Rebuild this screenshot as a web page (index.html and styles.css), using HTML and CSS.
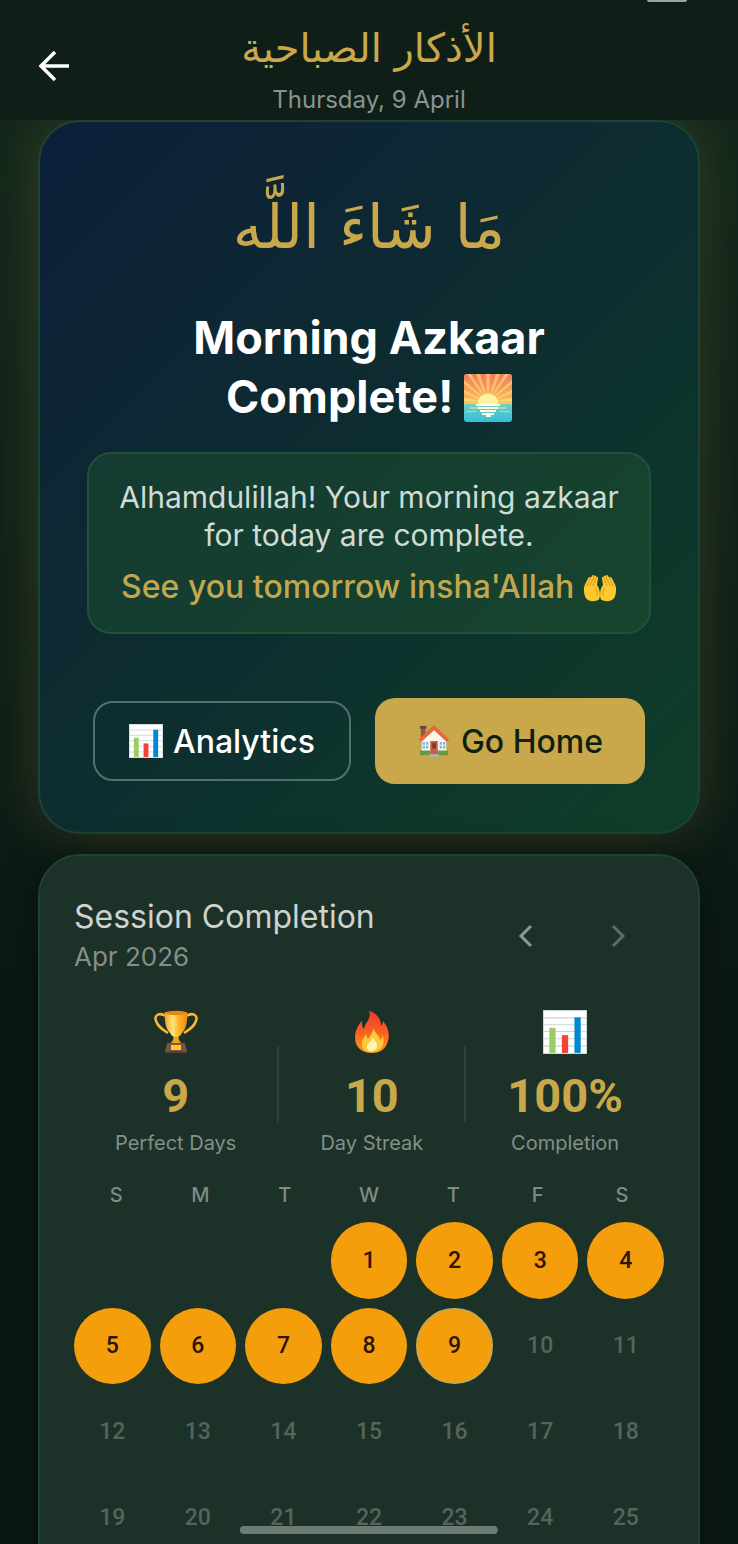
FILE: index.html
```html
<!DOCTYPE html>
<html lang="en">
<head>
    <meta charset="UTF-8">
    <meta name="viewport" content="width=device-width, initial-scale=1.0">
    <title>Morning Azkaar</title>
    <link rel="stylesheet" href="styles.css">
</head>
<body>
    <!-- Emoji artwork -->
    <svg class="sprite" aria-hidden="true">
        <defs>
            <linearGradient id="sky" x1="0" y1="0" x2="0" y2="1">
                <stop offset="0" stop-color="#f2795f"/>
                <stop offset="1" stop-color="#fcc75c"/>
            </linearGradient>
            <linearGradient id="sea" x1="0" y1="0" x2="0" y2="1">
                <stop offset="0.5" stop-color="#8fd3b5"/>
                <stop offset="1" stop-color="#2fc0dc"/>
            </linearGradient>
            <linearGradient id="cup" x1="0" y1="0" x2="1" y2="0">
                <stop offset="0" stop-color="#f79a1c"/>
                <stop offset="0.35" stop-color="#ffe680"/>
                <stop offset="0.6" stop-color="#fdb827"/>
                <stop offset="1" stop-color="#f18a12"/>
            </linearGradient>
            <linearGradient id="fire" x1="0" y1="0" x2="0" y2="1">
                <stop offset="0" stop-color="#f0382c"/>
                <stop offset="0.6" stop-color="#fb6a1c"/>
                <stop offset="1" stop-color="#ff9a1f"/>
            </linearGradient>
        </defs>
        <symbol id="sunrise" viewBox="0 0 48 48">
            <rect width="48" height="48" rx="3" fill="url(#sea)"/>
            <path d="M3 0h42a3 3 0 0 1 3 3v27H0V3a3 3 0 0 1 3-3z" fill="url(#sky)"/>
            <path d="M24 28 22 0h4zM24 28 12 0h4zM24 28 32 0h4zM24 28 3 0h4zM24 28 41 0h4zM24 28 0 6v4zM24 28 48 6v4zM24 28 0 16v3zM24 28 48 16v3zM24 28 0 24v3zM24 28 48 24v3z" fill="#ffe27a" opacity=".6"/>
            <path d="M13.500 30a10.500 10.500 0 1 1 21 0z" fill="#fff3a0"/>
            <path d="M6 33h36v2H6zM2 37h10v1H2zM36 37h10v1H36z" fill="#a8dcc0"/>
            <path d="M12 30h24v2H12zM14 33h20v2H14zM16 36h16v2H16zM18 39h12v2H18zM22 41h5v2h-5z" fill="#fffbe0"/>
        </symbol>
        <symbol id="chart" viewBox="0 0 42 42">
            <rect width="42" height="42" fill="#fff"/>
            <path d="M0 7.500h42M0 14h42M0 20.500h42M0 27.500h42M0 34.500h42" stroke="#ced3d6" stroke-width="1"/>
            <path d="M6 17h6v24H6z" fill="#9ccc65"/>
            <path d="M18 24h6v17h-6z" fill="#f44336"/>
            <path d="M30 7h6v34h-6z" fill="#0288d1"/>
            <rect x=".5" y=".5" width="41" height="41" fill="none" stroke="#cfd8dc"/>
        </symbol>
        <symbol id="hands" viewBox="0 0 34 28">
            <g id="palm">
                <path d="M16 25.500C12 28 5 28 2.500 23.500 1 20 .2 15 1.500 11.500L5 4.500c1-2 2.500-1.700 2.300-.2L9 1.800c1.400-1.500 2.600-.8 2.200.7 1.300-1.500 2.600-.8 2.300.7 1.200-.6 1.900.2 1.500 1.500L14 11c1.500 2 2.300 4 2.700 6.500.4 3 .4 6-.7 8z" fill="#fdc92e"/>
                <path d="M4 12l3.300-7.500M7 11.500l4-9M10 11.500l3.500-8M12.500 14c1.500 2 1.700 4 1.500 7" fill="none" stroke="#d9921a" stroke-width="1" stroke-linecap="round"/>
            </g>
            <use href="#palm" transform="matrix(-1 0 0 1 34 0)"/>
        </symbol>
        <symbol id="house" viewBox="0 0 34 36">
            <path d="M3 4h5v12H3z" fill="#8d5a43"/>
            <path d="M2 2h7v3H2z" fill="#6d4534"/>
            <path d="M4 17 17 5l13 12v14H4z" fill="#faf6ea"/>
            <path d="M17 1 1 16l2.500 3L17 6.500 30.500 19l2.500-3z" fill="#e8673c"/>
            <path d="M2 28h11v5H2zM21 28h11v5H21z" fill="#679a3c"/>
            <path d="M13 18h8v14h-8z" fill="#cf5a45"/>
            <path d="M15 20h4v6h-4z" fill="#8e342c"/>
            <path d="M5 19h6v7H5zM23 19h6v7h-6z" fill="#7db9dc"/>
            <path d="M8 19v7M5 22.500h6M26 19v7M23 22.500h6" stroke="#fff" stroke-width="1"/>
            <path d="M12 32h10v3H12z" fill="#a9b2b6"/>
        </symbol>
        <symbol id="trophy" viewBox="0 0 44 44">
            <path d="M12 6C5 2 0 5 2 11c2 6 7 9 12 12M32 6c7-4 12-1 10 5-2 6-7 9-12 12" fill="none" stroke="#fbb829" stroke-width="2.500"/>
            <path d="M20 24h4l1 6 3 4H16l3-4z" fill="#f3a21b"/>
            <path d="M11 2h22c1 9-1 17-5 21-2 3-3 4-6 4s-4-1-6-4c-4-4-6-12-5-21z" fill="url(#cup)"/>
            <ellipse cx="22" cy="3" rx="11" ry="2.200" fill="#e88a10"/>
            <path d="M13 33h18l2 9.500H11z" fill="#795548"/>
            <path d="M17 35h10v5H17z" fill="#ffca28"/>
            <path d="M11 41h22v2H11z" fill="#5d4037"/>
        </symbol>
        <symbol id="flame" viewBox="0 0 36 44">
            <path d="M15 1c8 2 12 8 12 15 1-1 2-3 2-5 5 6 7 13 5 20-2 8-8 12-16 12C8 43 1 37 1 28 1 21 4 15 8 11c0 4 0 6 2 8C11 12 18 9 15 1z" fill="url(#fire)"/>
            <path d="M19 16c0 6 7 9 7 14 2-1 3-4 2-6 3 6 3 16-9 18-9 1-12-5-11-10 1-4 3-5 4-8 1 3 1 4 2 5 3-4 6-7 5-13z" fill="#ffc93c"/>
            <path d="M19 27c1 4 5 6 4 10-1 5-10 6-10 0 0-4 5-5 6-10z" fill="#fff3b0"/>
        </symbol>
    </svg>

    <header class="top-bar">
        <span class="status-pill"></span>
        <button type="button" class="icon-button back" aria-label="Back">
            <svg viewBox="0 0 32 32"><path d="M31 16H3M17 2 3 16l14 14" fill="none" stroke="#fff" stroke-width="3.500"/></svg>
        </button>
        <div class="heading">
            <h1 lang="ar" dir="rtl">الأذكار الصباحية</h1>
            <p>Thursday, 9 April</p>
        </div>
    </header>

    <main>
        <section class="card complete-card">
            <p class="praise" lang="ar" dir="rtl">مَا شَاءَ اللَّه</p>
            <h2>Morning Azkaar<br>Complete! <svg class="emoji"><use href="#sunrise"/></svg></h2>
            <div class="message">
                <p>Alhamdulillah! Your morning azkaar<br>for today are complete.</p>
                <p class="see-you">See you tomorrow insha'Allah <svg class="emoji"><use href="#hands"/></svg></p>
            </div>
            <div class="actions">
                <button type="button" class="btn btn-outline"><svg class="emoji"><use href="#chart"/></svg> Analytics</button>
                <button type="button" class="btn btn-gold"><svg class="emoji"><use href="#house"/></svg> Go Home</button>
            </div>
        </section>

        <section class="card session-card">
            <div class="session-header">
                <div>
                    <h3>Session Completion</h3>
                    <p>Apr 2026</p>
                </div>
                <div class="month-nav">
                    <button type="button" class="icon-button" aria-label="Previous month">
                        <svg viewBox="0 0 24 24"><path d="M17 2 7 12l10 10" fill="none" stroke="currentColor" stroke-width="3"/></svg>
                    </button>
                    <button type="button" class="icon-button next" aria-label="Next month">
                        <svg viewBox="0 0 24 24"><path d="m7 2 10 10L7 22" fill="none" stroke="currentColor" stroke-width="3"/></svg>
                    </button>
                </div>
            </div>

            <div class="stats">
                <div class="stat">
                    <svg class="emoji"><use href="#trophy"/></svg>
                    <strong>9</strong>
                    <span>Perfect Days</span>
                </div>
                <div class="divider"></div>
                <div class="stat">
                    <svg class="emoji"><use href="#flame"/></svg>
                    <strong>10</strong>
                    <span>Day Streak</span>
                </div>
                <div class="divider"></div>
                <div class="stat">
                    <svg class="emoji"><use href="#chart"/></svg>
                    <strong>100%</strong>
                    <span>Completion</span>
                </div>
            </div>

            <div class="weekdays">
                <span>S</span><span>M</span><span>T</span><span>W</span><span>T</span><span>F</span><span>S</span>
            </div>
            <div class="days">
                <span class="day done first">1</span>
                <span class="day done">2</span>
                <span class="day done">3</span>
                <span class="day done">4</span>
                <span class="day done">5</span>
                <span class="day done">6</span>
                <span class="day done">7</span>
                <span class="day done">8</span>
                <span class="day done today">9</span>
                <span class="day">10</span>
                <span class="day">11</span>
                <span class="day">12</span>
                <span class="day">13</span>
                <span class="day">14</span>
                <span class="day">15</span>
                <span class="day">16</span>
                <span class="day">17</span>
                <span class="day">18</span>
                <span class="day">19</span>
                <span class="day">20</span>
                <span class="day">21</span>
                <span class="day">22</span>
                <span class="day">23</span>
                <span class="day">24</span>
                <span class="day">25</span>
            </div>
        </section>
    </main>
    <div class="home-indicator"></div>
</body>
</html>
```

FILE: styles.css
```css
/* General Styles */
* {
    box-sizing: border-box;
}

body {
    font-family: 'Inter', sans-serif;
    background: #0c1a14;
    color: white;
    margin: 0;
    height: 100vh;
    display: flex;
    flex-direction: column;
    overflow: hidden;
    position: relative;
}

h1, h2, h3, p {
    margin: 0;
}

button {
    font-family: inherit;
    cursor: pointer;
}

.sprite {
    position: absolute;
    width: 0;
    height: 0;
}

.icon-button {
    display: flex;
    align-items: center;
    justify-content: center;
    background: none;
    border: none;
    padding: 0;
    color: #8e9994;
}

/* Top Bar */
.top-bar {
    display: grid;
    grid-template-columns: 32px 1fr 32px;
    padding: 12px 38px 0;
    height: 120px;
    flex-shrink: 0;
    background: #0f1f18;
    position: relative;
}

.status-pill {
    position: absolute;
    top: 0;
    right: 51px;
    width: 40px;
    height: 2px;
    border-radius: 0 0 8px 8px;
    background: #9aa39f;
}

.back {
    align-self: center;
}

.back svg {
    width: 32px;
    height: 32px;
}

.heading {
    text-align: center;
}

.heading h1 {
    font-family: 'DejaVu Sans', sans-serif;
    font-size: 40px;
    font-weight: normal;
    line-height: 72px;
    color: #c8a84b;
}

.heading p {
    font-size: 24px;
    line-height: 32px;
    color: #8a948f;
}

/* Content */
main {
    flex: 1;
    min-height: 0;
    overflow: auto;
    scrollbar-width: none;
    padding: 0 38px;
    background: linear-gradient(#12271b, #0b1914 60%);
}

.card {
    border: 2px solid #1d4336;
    border-radius: 42px;
    position: relative;
}

.complete-card {
    padding: 40px 47px 48px;
    text-align: center;
    background: linear-gradient(135deg, #0d1f3a, #0d2d30 50%, #0f3f28);
    box-shadow: 0 0 56px rgba(200, 168, 75, 0.2);
}

.praise {
    font-family: 'DejaVu Sans', sans-serif;
    font-size: 60px;
    line-height: 130px;
    color: #c8a84b;
}

h2 {
    font-size: 45px;
    font-weight: 700;
    line-height: 59px;
    margin-top: 16px;
}

h2 .emoji {
    width: 48px;
    height: 48px;
    vertical-align: -9px;
}

.message {
    margin-top: 26px;
    padding: 24px 0 26px;
    border: 2px solid #1f5237;
    border-radius: 24px;
    background: rgba(30, 80, 48, 0.5);
    font-size: 30px;
    line-height: 38px;
    color: #cfdbd5;
}

.see-you {
    margin-top: 14px;
    font-size: 32px;
    font-weight: 500;
    color: #c1a850;
}

.see-you .emoji {
    width: 34px;
    height: 28px;
    vertical-align: -4px;
}

.actions {
    display: flex;
    justify-content: center;
    align-items: center;
    gap: 24px;
    margin-top: 64px;
}

.btn {
    display: flex;
    align-items: center;
    gap: 10px;
    height: 80px;
    border-radius: 20px;
    font-size: 32px;
    font-weight: 500;
}

.btn .emoji {
    width: 34px;
    height: 34px;
}

.btn-outline {
    padding: 0 34px;
    background: none;
    border: 2px solid #53706b;
    color: white;
}

.btn-gold {
    height: 86px;
    padding: 0 42px;
    border: none;
    background: #c8a84b;
    color: #0f1f10;
}

/* Session Card */
.session-card {
    margin-top: 20px;
    padding: 40px 34px;
    background: #1c3127;
    box-shadow: 0 8px 40px rgba(0, 0, 0, 0.4);
}

.session-header {
    display: flex;
    justify-content: space-between;
    align-items: center;
}

.session-header h3 {
    font-size: 32px;
    font-weight: 400;
    line-height: 42px;
    color: #cdd3d0;
}

.session-header p {
    font-size: 26px;
    line-height: 38px;
    color: #848f89;
}

.month-nav {
    display: flex;
}

.month-nav .icon-button {
    width: 92px;
    height: 80px;
}

.month-nav svg {
    width: 24px;
    height: 24px;
}

.month-nav .next {
    color: #5d6d65;
}

.stats {
    display: flex;
    justify-content: space-evenly;
    align-items: center;
    margin-top: 34px;
}

.stat {
    display: flex;
    flex-direction: column;
    align-items: center;
}

.stat .emoji {
    width: 44px;
    height: 44px;
}

.stat strong {
    font-family: 'Roboto', sans-serif;
    font-size: 47px;
    line-height: 56px;
    margin-top: 14px;
    color: #c8a84b;
}

.stat span {
    font-size: 20px;
    line-height: 30px;
    margin-top: 4px;
    color: #848f89;
}

.divider {
    width: 2px;
    height: 77px;
    background: #2f4239;
}

/* Calendar */
.weekdays {
    display: grid;
    grid-template-columns: repeat(7, 1fr);
    margin-top: 22px;
    text-align: center;
    font-size: 20px;
    font-weight: 500;
    line-height: 30px;
    color: #7f8b85;
}

.days {
    display: grid;
    grid-template-columns: repeat(7, 1fr);
    gap: 9px;
    margin-top: 12px;
    font-family: 'Roboto', sans-serif;
    font-size: 23px;
    font-weight: 500;
    color: #55645d;
}

.day {
    display: flex;
    align-items: center;
    justify-content: center;
    aspect-ratio: 1;
    border-radius: 50%;
}

.day.first {
    grid-column-start: 4;
}

.day.done {
    background: #f59e0b;
    color: #2b1408;
}

.day.today {
    border: 2px solid #c8a84b;
}

.home-indicator {
    position: absolute;
    left: 50%;
    bottom: 10px;
    width: 35%;
    height: 8px;
    border-radius: 4px;
    background: #6c7b73;
    transform: translateX(-50%);
}
```
